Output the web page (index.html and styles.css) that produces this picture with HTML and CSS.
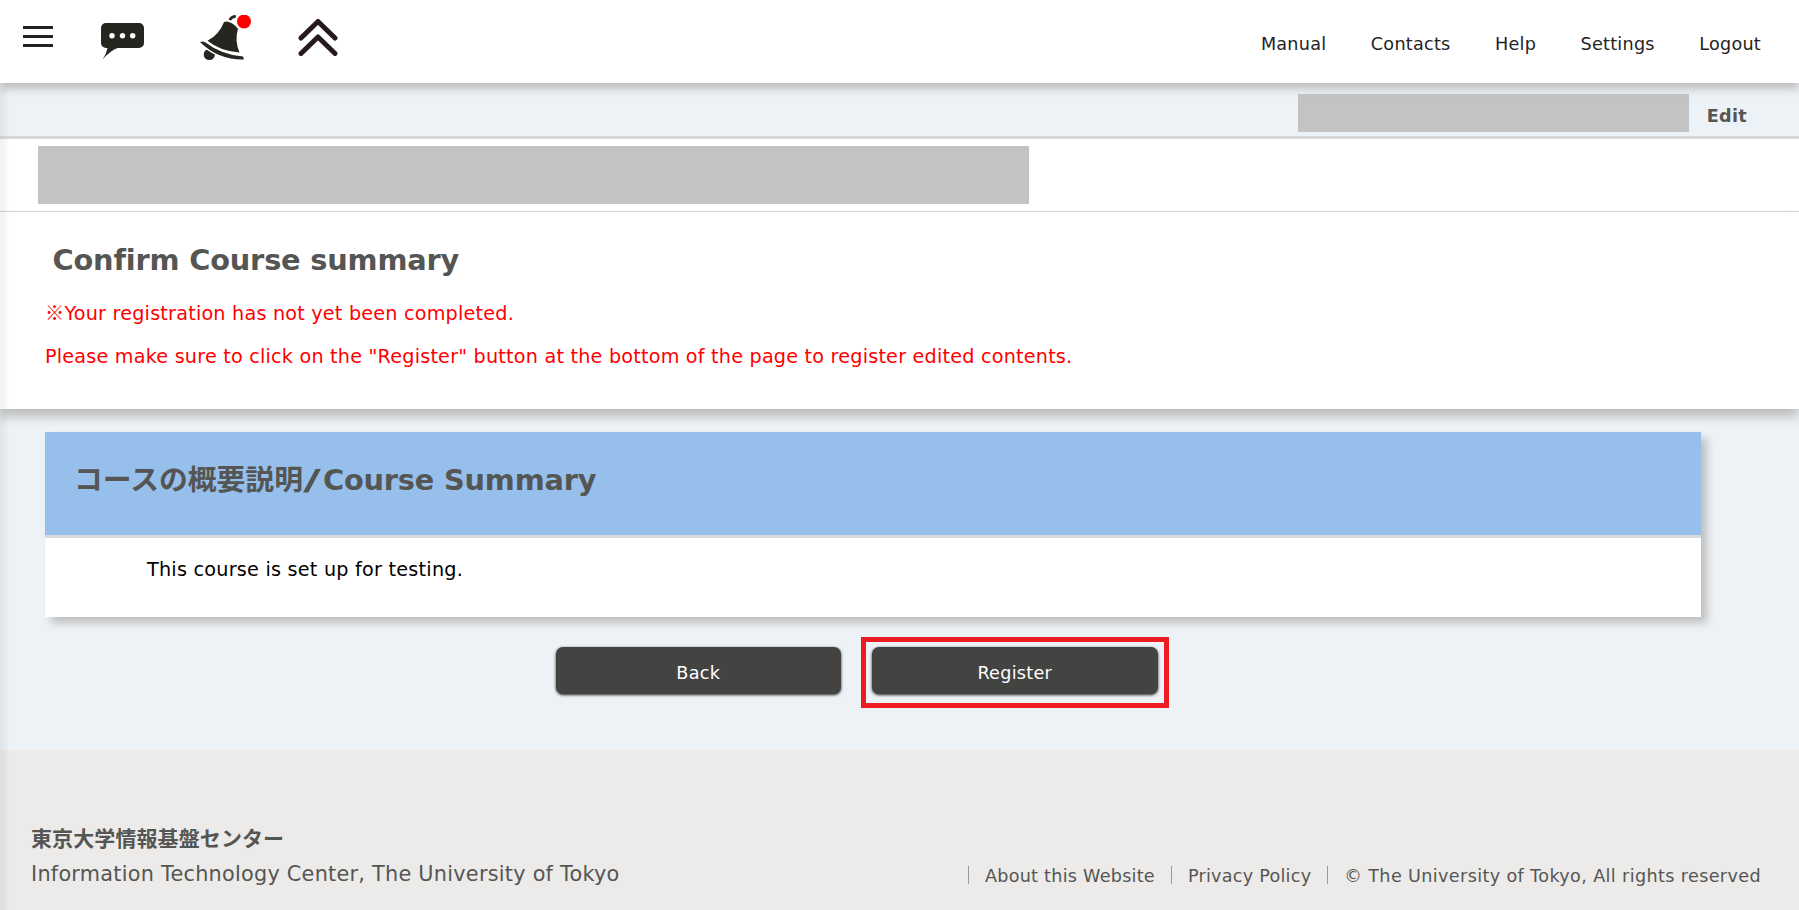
FILE: index.html
```html
<!DOCTYPE html>
<html lang="en">
<head>
<meta charset="utf-8">
<title>Confirm Course summary</title>
<link rel="stylesheet" href="styles.css">
</head>
<body>
<header class="header">
  <div class="header-icons">
    <svg class="icon-menu" width="30" height="21" viewBox="0 0 30 21"><path d="M0 1.500h30M0 10.500h30M0 19.500h30" stroke="#24231f" stroke-width="3"/></svg>
    <svg class="icon-chat" width="44" height="38" viewBox="0 0 44 38"><path d="M5 0h33a5 5 0 0 1 5 5v15a5 5 0 0 1-5 5H16.500Q9 28 1.500 36.500Q5.500 31 6.500 25H5a5 5 0 0 1-5-5V5a5 5 0 0 1 5-5z" fill="#272520"/><g fill="#fff"><circle cx="11" cy="12.700" r="2.700"/><circle cx="21.500" cy="12.700" r="2.700"/><circle cx="31.700" cy="12.700" r="2.700"/></g></svg>
    <svg class="icon-bell" width="52" height="46" viewBox="0 0 52 46"><circle cx="9.300" cy="39.500" r="5.600" fill="#272520"/><path d="M0 27Q3 26 5.500 27.500Q22 40 43 41.500L44 44.500Q18 45 0 27z" fill="#272520" stroke="#fff" stroke-width="3" paint-order="stroke"/><path d="M24 7Q30 5 38 13.500Q34.500 26 39.500 37.500Q20 36 7.500 25.700Q19 20 24 7z" fill="#272520"/><path d="M29.800 5Q31.500 1.500 35.800 1.400" stroke="#272520" stroke-width="2.800" fill="none"/><circle cx="44" cy="6.500" r="9.300" fill="#fff"/><circle cx="44" cy="6.500" r="7" fill="#f00"/></svg>
    <svg class="icon-up" width="40" height="40" viewBox="0 0 40 40"><path d="M3 20L20 3.500L37 20M3 35.500L20 19L37 35.500" fill="none" stroke="#271a1a" stroke-width="5" stroke-linecap="round" stroke-linejoin="round"/></svg>
  </div>
  <nav class="nav"><a>Manual</a><a>Contacts</a><a>Help</a><a>Settings</a><a>Logout</a></nav>
</header>
<main class="page">
  <div class="user-bar"><div class="user-name"></div><a class="edit">Edit</a></div>
  <div class="course-bar"><div class="course-name"></div></div>
  <section class="intro">
    <h1 class="title">Confirm Course summary</h1>
    <p class="notice"><span class="mark">※</span>Your registration has not yet been completed.</p>
    <p class="notice notice-next">Please make sure to click on the "Register" button at the bottom of the page to register edited contents.</p>
  </section>
  <section class="card">
    <h2 class="card-title">コースの概要説明<span class="slash">/</span><span class="en">Course Summary</span></h2>
    <p class="card-text">This course is set up for testing.</p>
  </section>
  <div class="actions"><button class="btn">Back</button><div class="highlight"><button class="btn">Register</button></div></div>
  <footer class="footer">
    <div class="org"><strong class="org-jp">東京大学情報基盤センター</strong><span class="org-en">Information Technology Center, The University of Tokyo</span></div>
    <div class="legal"><i class="sep"></i><span>About this Website</span><i class="sep"></i><span>Privacy Policy</span><i class="sep"></i><span class="copyright">© The University of Tokyo, All rights reserved</span></div>
  </footer>
</main>
</body>
</html>
```
FILE: styles.css
```css
* { box-sizing: border-box; }
body { margin: 0; background: #edf2f7; font-family: "DejaVu Sans", Verdana, "Noto Sans CJK JP", sans-serif; }
h1, h2, p { margin: 0; }

.header { position: relative; z-index: 2; height: 83px; background: #fff; display: flex; justify-content: space-between; box-shadow: 0 6px 8px #bfbfbf; }
.header-icons { display: flex; align-items: flex-start; padding-left: 23px; }
.icon-menu { margin-top: 26px; }
.icon-chat { margin: 23px 0 0 48px; }
.icon-bell { margin: 15px 0 0 55px; }
.icon-up { margin: 18px 0 0 46px; filter: blur(.6px); }
.nav { display: flex; gap: 44.500px; padding: 32px 38px 0 0; }
.nav a { font-size: 17.600px; line-height: 24px; letter-spacing: .25px; color: #24231f; }

.page { position: relative; height: 827px; display: flex; flex-direction: column; }
.page::after { content: ""; position: absolute; inset: 0 auto 0 0; width: 9px; background: linear-gradient(90deg, rgba(0,0,0,.055), rgba(0,0,0,.035) 60%, transparent); }
.user-bar { height: 56px; border-bottom: 3px solid #d6dadc; display: flex; justify-content: flex-end; padding: 11px 52px 0 0; }
.user-name { width: 391px; height: 38px; background: #c3c3c3; margin-right: 17.500px; }
.edit { font-size: 17.600px; font-weight: bold; line-height: 44px; letter-spacing: .3px; color: #555654; }
.course-bar { height: 73px; background: #fff; border-bottom: 1px solid #d3d3d3; padding: 7px 38px; }
.course-name { width: 991px; height: 58px; background: #c3c3c3; }

.intro { height: 197px; background: #fff; box-shadow: 0 8px 10px #bdbebd; padding: 28px 45px 0; }
.title { font-size: 28.800px; line-height: 40px; letter-spacing: -.17px; color: #555654; padding-left: 7.500px; }
.notice { font-size: 19.200px; line-height: 28px; letter-spacing: .21px; color: #f00; margin-top: 20px; }
.notice-next { margin-top: 15px; }
.mark { font-family: "Noto Sans CJK JP", sans-serif; font-weight: 300; line-height: 1; }

.card { width: 1656px; height: 185px; margin: 23px 0 0 45px; background: #fff; box-shadow: 6px 6px 8px #bfbfbf; }
.card-title { height: 106px; background: #96c0eb; border-bottom: 3px solid #d6dadc; padding: 28px 0 0 29px; font-size: 28.800px; line-height: 40px; color: #555654; }
.slash { display: inline-block; width: 20px; transform-origin: left; transform: scaleX(1.700); }
.en { letter-spacing: -.18px; }
.card-text { padding: 18px 0 0 102px; font-size: 19.200px; line-height: 28px; letter-spacing: .24px; color: #000; }

.actions { display: flex; gap: 20px; margin: 20px 0 0 555.500px; height: 71px; }
.btn { display: block; width: 285.500px; height: 47px; padding: 4px 0 0; border: 0; border-radius: 7px; background: #434442; color: #fff; font: 17.600px "DejaVu Sans", sans-serif; letter-spacing: .28px; box-shadow: 0 1px 3px #222; }
.actions > .btn { margin-top: 10px; }
.highlight { width: 308px; border: 5px solid #ed1c24; padding: 5px 6px; }

.footer { margin-top: 42px; height: 160px; background: #ecebe9; color: #555654; display: flex; justify-content: space-between; padding: 72px 38px 0 31px; }
.org { display: flex; flex-direction: column; align-items: flex-start; }
.org-jp { font-size: 21px; line-height: 34px; letter-spacing: .1px; }
.org-en { font-size: 20.800px; line-height: 36px; letter-spacing: .25px; }
.legal { display: flex; font-size: 17.600px; line-height: 28px; letter-spacing: .25px; padding-top: 40px; }
.copyright { letter-spacing: .37px; }
.sep { width: 1px; height: 18px; background: #999; margin: 4px 16px 0; }
```
